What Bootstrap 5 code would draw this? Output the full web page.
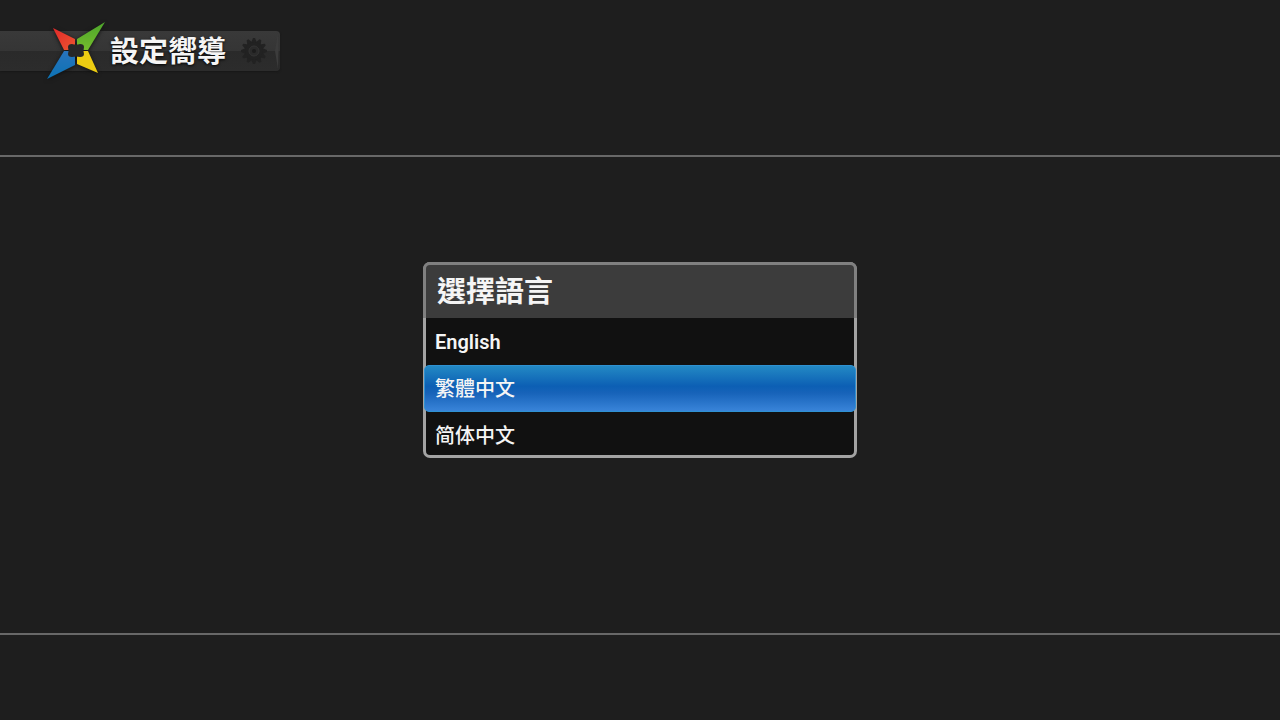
<!DOCTYPE html>
<html lang="zh-Hant">
<head>
<meta charset="utf-8">
<meta name="viewport" content="width=device-width, initial-scale=1">
<title>設定嚮導</title>
<link href="https://cdn.jsdelivr.net/npm/bootstrap@5.3.0/dist/css/bootstrap.min.css" rel="stylesheet">
<style>
body { background: #1e1e1e; color: #f5f5f5; font-family: Roboto, "Noto Sans CJK TC", sans-serif; }
.top-area { min-height: 157px; padding-top: 22px; border-bottom: 2px solid #686868; }
.bottom-area { min-height: 87px; border-top: 2px solid #686868; }
.title-tab {
  width: 280px; height: 40px; margin-top: 9px; padding-left: 46px; padding-right: 12px;
  background: linear-gradient(#393939, #353535 50%, #2a2a2a 50%, #2c2c2c);
  border-radius: 0 4px 4px 0;
  box-shadow: 0 1px 2px #181818;
}
.title-tab h1 { font-size: 29px; line-height: 40px; font-weight: 700; margin-left: 4px; padding-top: 2px; text-shadow: 0 1px 3px #000; }
.logo { margin: -12px 0; filter: drop-shadow(0 1px 2px #111); }
.tab-edge { margin-left: 6px; margin-right: -11px; }
.stage { padding-bottom: 70px; }
.language-box { width: 434px; background: #111; border: 3px solid #a3a3a3; border-radius: 7px; }
.language-box .box-title {
  margin: -3px -3px 0; height: 56px; padding-left: 11px; font-size: 29px; line-height: 54px; font-weight: 700;
  background: #3c3c3c; border: 3px solid #808080; border-bottom: 0; border-radius: 7px 7px 0 0;
}
.language-box .choice {
  height: 47px; padding: 0 9px; border: 0; background: transparent; color: #f5f5f5;
  font-size: 20px; line-height: 48px; font-weight: 500;
}
.language-box .choice:last-child { height: 43px; line-height: 46px; }
.language-box .latin { font-weight: 600; }
.language-box .simplified { font-family: "Noto Sans CJK SC", sans-serif; }
.language-box .choice.active {
  margin: 0 -2px; padding: 0 10px; width: auto; border: 1px solid #2f91d2; border-radius: 5px; line-height: 46px;
  background: linear-gradient(#2389c4, #0c5fb4 45%, #1763b9 60%, #3984d9);
}
</style>
<script src="https://cdn.jsdelivr.net/npm/bootstrap@5.3.0/dist/js/bootstrap.bundle.min.js" defer></script>
</head>
<body class="d-flex flex-column min-vh-100">
<header class="top-area">
  <div class="title-tab d-flex align-items-center">
    <svg class="logo flex-shrink-0" width="60" height="60" viewBox="0 0 60 60" aria-hidden="true">
      <defs>
        <linearGradient id="red" x2="1" y2="1"><stop stop-color="#e12a2a"/><stop offset="1" stop-color="#ee5430"/></linearGradient>
        <linearGradient id="green" x2="0" y2="1"><stop stop-color="#4da52c"/><stop offset="1" stop-color="#74bd2c"/></linearGradient>
        <linearGradient id="blue" x2="0" y2="1"><stop stop-color="#2873bd"/><stop offset="1" stop-color="#0c73b4"/></linearGradient>
      </defs>
      <path fill="url(#red)" d="M7 7L29 18V29H18Z"/>
      <path fill="url(#green)" d="M59 1L42 29H31V18Z"/>
      <path fill="url(#blue)" d="M1 58L18 30H29V44Z"/>
      <path fill="#edcc12" d="M52 52L31 43V30H42Z"/>
      <path d="M26 23Q30 24 34 23Q38 23 38 26Q37 30 38 33Q38 36 34 36Q30 35 26 36Q22 36 22 33Q23 30 22 26Q22 23 26 23Z" fill="#272727"/>
    </svg>
    <h1 class="mb-0 text-nowrap">設定嚮導</h1>
    <svg class="ms-auto flex-shrink-0" width="28" height="28" viewBox="-14 -14 28 28" aria-hidden="true">
      <g fill="#222">
        <path id="tooth" d="M-1-13H1L3-8H-3ZM-1 13H1L3 8H-3Z"/>
        <use href="#tooth" transform="rotate(30)"/>
        <use href="#tooth" transform="rotate(60)"/>
        <use href="#tooth" transform="rotate(90)"/>
        <use href="#tooth" transform="rotate(120)"/>
        <use href="#tooth" transform="rotate(150)"/>
        <circle r="9"/>
      </g>
      <circle r="5" fill="#2a2a2a" stroke="#343434"/>
      <circle r="2" fill="#1c1c1c"/>
    </svg>
    <svg class="tab-edge flex-shrink-0" width="5" height="40" viewBox="0 0 5 40" aria-hidden="true"><path fill="#3c3c3c" d="M4 2L1 20L4 38Q5 20 4 2Z"/></svg>
  </div>
</header>
<main class="stage flex-grow-1 d-flex align-items-center justify-content-center">
  <section class="language-box" aria-labelledby="language-title">
    <h2 class="box-title mb-0" id="language-title">選擇語言</h2>
    <div class="list-group list-group-flush">
      <button type="button" class="choice latin list-group-item list-group-item-action" lang="en">English</button>
      <button type="button" class="choice list-group-item list-group-item-action active" aria-current="true">繁體中文</button>
      <button type="button" class="choice simplified list-group-item list-group-item-action" lang="zh-Hans">简体中文</button>
    </div>
  </section>
</main>
<footer class="bottom-area"></footer>
</body>
</html>
